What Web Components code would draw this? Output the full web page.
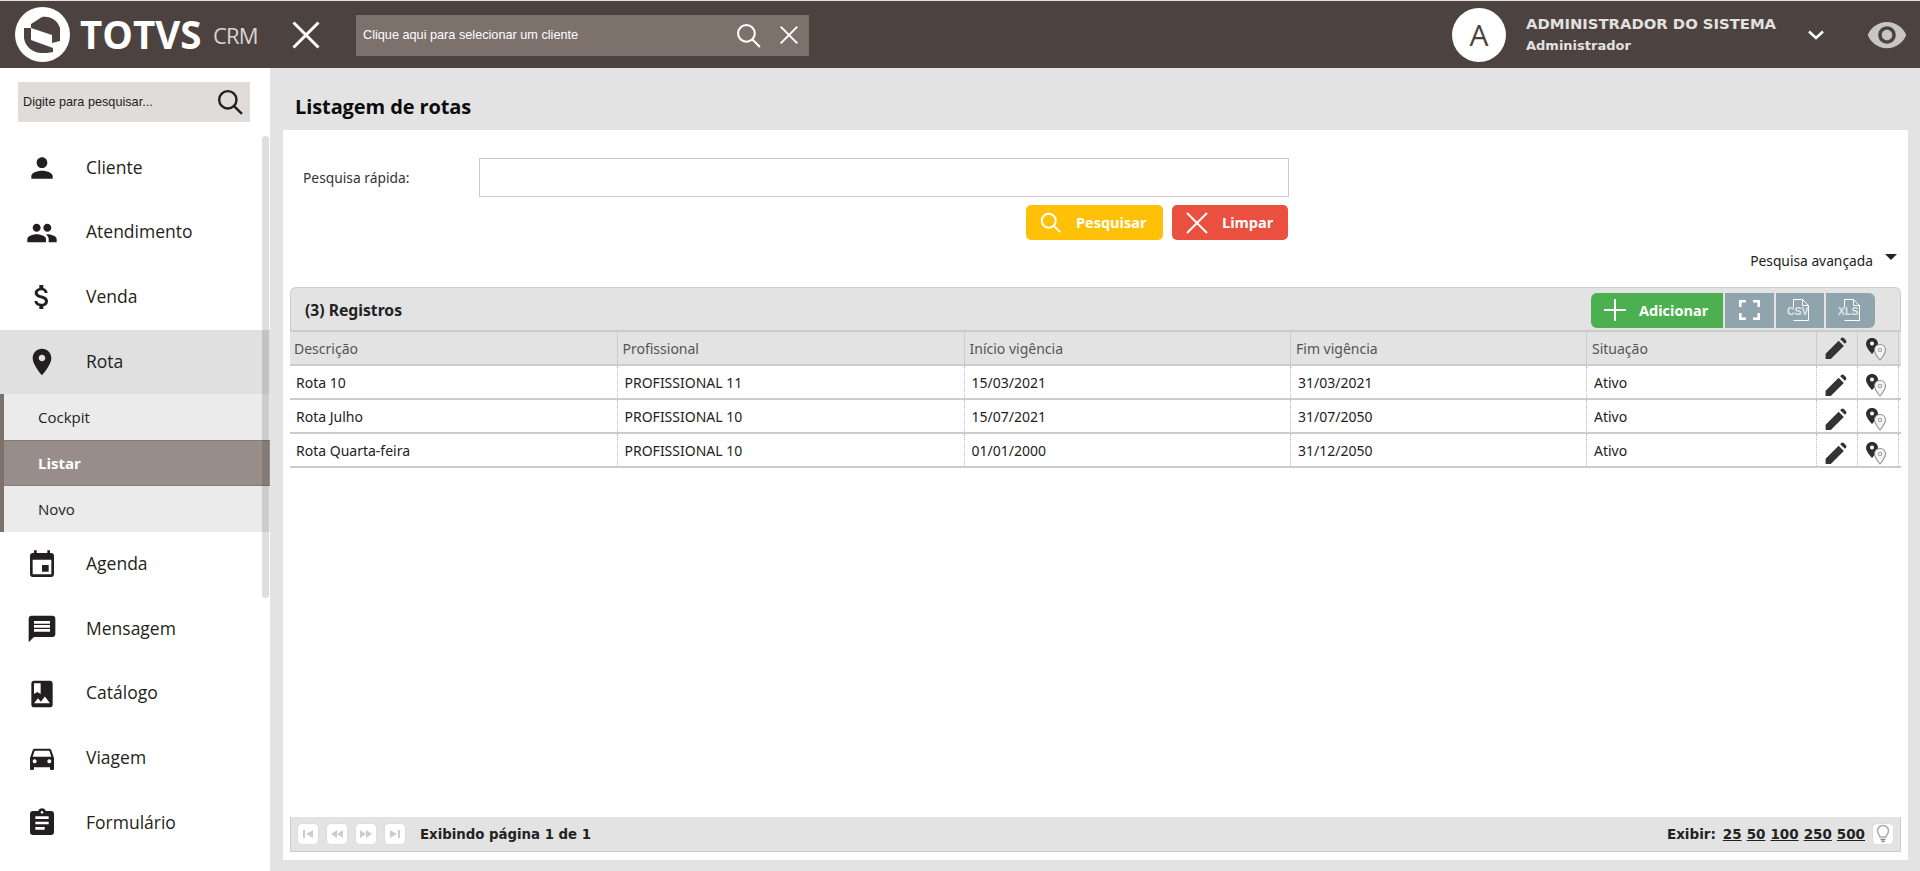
<!DOCTYPE html>
<html lang="pt-BR">
<head>
<meta charset="utf-8">
<title>Listagem de rotas</title>
<style>
  html, body { margin: 0; height: 100%; overflow: hidden; background: #e3e3e3; }
  body { font-family: "Noto Sans", sans-serif; display: flex; flex-direction: column; height: 871px; }
</style>
</head>
<body>
<crm-header></crm-header>
<div style="display:flex;flex:1;min-height:0">
  <crm-sidebar>
    <crm-menu-item icon="person" label="Cliente"></crm-menu-item>
    <crm-menu-item icon="people" label="Atendimento"></crm-menu-item>
    <crm-menu-item icon="money" label="Venda"></crm-menu-item>
    <crm-menu-item icon="place" label="Rota" open></crm-menu-item>
    <crm-sub-item>Cockpit</crm-sub-item>
    <crm-sub-item active>Listar</crm-sub-item>
    <crm-sub-item>Novo</crm-sub-item>
    <crm-menu-item icon="event" label="Agenda"></crm-menu-item>
    <crm-menu-item icon="message" label="Mensagem"></crm-menu-item>
    <crm-menu-item icon="album" label="Catálogo"></crm-menu-item>
    <crm-menu-item icon="car" label="Viagem"></crm-menu-item>
    <crm-menu-item icon="assignment" label="Formulário"></crm-menu-item>
  </crm-sidebar>
  <crm-main title-text="Listagem de rotas">
    <crm-search></crm-search>
    <crm-grid>
      <crm-row head><span>Descrição</span><span>Profissional</span><span>Início vigência</span><span>Fim vigência</span><span>Situação</span></crm-row>
      <crm-row><span>Rota 10</span><span>PROFISSIONAL 11</span><span>15/03/2021</span><span>31/03/2021</span><span>Ativo</span></crm-row>
      <crm-row><span>Rota Julho</span><span>PROFISSIONAL 10</span><span>15/07/2021</span><span>31/07/2050</span><span>Ativo</span></crm-row>
      <crm-row><span>Rota Quarta-feira</span><span>PROFISSIONAL 10</span><span>01/01/2000</span><span>31/12/2050</span><span>Ativo</span></crm-row>
    </crm-grid>
    <crm-pager></crm-pager>
  </crm-main>
</div>

<script>
const ICONS = {
  person: 'M12 12c2.21 0 4-1.79 4-4s-1.79-4-4-4-4 1.79-4 4 1.79 4 4 4zm0 2c-2.67 0-8 1.34-8 4v2h16v-2c0-2.66-5.33-4-8-4z',
  people: 'M16 11c1.66 0 2.99-1.34 2.99-3S17.66 5 16 5c-1.66 0-3 1.34-3 3s1.34 3 3 3zm-8 0c1.66 0 2.99-1.34 2.99-3S9.66 5 8 5C6.34 5 5 6.34 5 8s1.34 3 3 3zm0 2c-2.33 0-7 1.17-7 3.5V19h14v-2.5c0-2.33-4.67-3.5-7-3.5zm8 0c-.29 0-.62.02-.97.05 1.16.84 1.97 1.97 1.97 3.45V19h6v-2.5c0-2.33-4.67-3.5-7-3.5z',
  money: 'M11.8 10.9c-2.27-.59-3-1.2-3-2.15 0-1.09 1.01-1.85 2.7-1.85 1.78 0 2.44.85 2.5 2.1h2.21c-.07-1.72-1.12-3.3-3.21-3.81V3h-3v2.16c-1.94.42-3.5 1.68-3.5 3.61 0 2.31 1.91 3.46 4.7 4.13 2.5.6 3 1.48 3 2.41 0 .69-.49 1.79-2.7 1.79-2.06 0-2.87-.92-2.98-2.1h-2.2c.12 2.19 1.76 3.42 3.68 3.83V21h3v-2.15c1.95-.37 3.5-1.5 3.5-3.55 0-2.84-2.43-3.81-4.7-4.4z',
  place: 'M12 2C8.13 2 5 5.13 5 9c0 5.25 7 13 7 13s7-7.75 7-13c0-3.87-3.13-7-7-7zm0 9.5c-1.38 0-2.5-1.12-2.5-2.5s1.12-2.5 2.5-2.5 2.5 1.12 2.5 2.5-1.12 2.5-2.5 2.5z',
  event: 'M17 12h-5v5h5v-5zM16 1v2H8V1H6v2H5c-1.11 0-1.99.9-1.99 2L3 19c0 1.1.89 2 2 2h14c1.1 0 2-.9 2-2V5c0-1.1-.9-2-2-2h-1V1h-2zm3 18H5V8h14v11z',
  message: 'M20 2H4c-1.1 0-1.99.9-1.99 2L2 22l4-4h14c1.1 0 2-.9 2-2V4c0-1.1-.9-2-2-2zm-2 12H6v-2h12v2zm0-3H6V9h12v2zm0-3H6V6h12v2z',
  album: 'M18 2H6c-1.1 0-2 .9-2 2v16c0 1.1.9 2 2 2h12c1.1 0 2-.9 2-2V4c0-1.1-.9-2-2-2zM6 4h5v8l-2.5-1.5L6 12V4zm0 15l3-3.86 2.14 2.58 3-3.86L18 19H6z',
  car: 'M18.92 6.01C18.72 5.42 18.16 5 17.5 5h-11c-.66 0-1.21.42-1.42 1.01L3 12v8c0 .55.45 1 1 1h1c.55 0 1-.45 1-1v-1h12v1c0 .55.45 1 1 1h1c.55 0 1-.45 1-1v-8l-2.08-5.99zM6.5 16c-.83 0-1.5-.67-1.5-1.5S5.67 13 6.5 13s1.5.67 1.5 1.5S7.33 16 6.5 16zm11 0c-.83 0-1.5-.67-1.5-1.5s.67-1.5 1.5-1.5 1.5.67 1.5 1.5-.67 1.5-1.5 1.5zM5 11l1.5-4.5h11L19 11H5z',
  assignment: 'M19 3h-4.18C14.4 1.84 13.3 1 12 1c-1.3 0-2.4.84-2.82 2H5c-1.1 0-2 .9-2 2v14c0 1.1.9 2 2 2h14c1.1 0 2-.9 2-2V5c0-1.1-.9-2-2-2zm-7 0c.55 0 1 .45 1 1s-.45 1-1 1-1-.45-1-1 .45-1 1-1zm2 14H7v-2h7v2zm3-4H7v-2h10v2zm0-4H7V7h10v2z',
  edit: 'M2.500 22v-5L15 4.500 20 9.500 7.500 22zM16.500 3l1-1c.8-.7 1.700-.7 2.500 0l2 2c.7.8.7 1.700 0 2.500l-1 1z',
  eye: 'M12 4.5C7 4.5 2.73 7.61 1 12c1.73 4.39 6 7.5 11 7.5s9.27-3.11 11-7.5c-1.73-4.39-6-7.5-11-7.5zM12 17c-2.76 0-5-2.24-5-5s2.24-5 5-5 5 2.24 5 5-2.24 5-5 5zm0-8c-1.66 0-3 1.34-3 3s1.34 3 3 3 3-1.34 3-3-1.34-3-3-3z'
};
const svgIcon = (name, size, color) =>
  `<svg width="${size}" height="${size}" viewBox="0 0 24 24" fill="${color}"><path d="${ICONS[name]}"/></svg>`;
// thin line icons used by the search boxes and buttons
const lens = (w, color, sw = 2) =>
  `<svg width="${w}" height="${w}" viewBox="0 0 24 24" fill="none" stroke="${color}" stroke-width="${sw}"><circle cx="10" cy="10" r="8"/><path d="M15.5 15.5L23 23"/></svg>`;
const cross = (w, color, sw = 2) =>
  `<svg width="${w}" height="${w}" viewBox="0 0 24 24" fill="none" stroke="${color}" stroke-width="${sw}"><path d="M2 2L22 22M22 2L2 22"/></svg>`;
const pins = `<svg width="24" height="24" viewBox="0 0 24 24">
  <path d="M8 1C4.3 1 2 3.700 2 7c0 3.800 6 10 6 10s6-6.200 6-10c0-3.300-2.300-6-6-6z" fill="#2e2e2e"/><circle cx="8" cy="6.500" r="2" fill="#fff"/>
  <path d="M16 7.500c-3.300 0-5.500 2.500-5.500 5.500 0 3.500 5.500 10 5.500 10s5.500-6.500 5.500-10c0-3-2.200-5.500-5.500-5.500z" fill="#f4f4f4" stroke="#8f8f8f" stroke-width="1.100"/><circle cx="16" cy="13" r="1.700" fill="none" stroke="#999"/>
</svg>`;

class CrmHeader extends HTMLElement {
  connectedCallback() {
    this.attachShadow({ mode: 'open' });
    this.shadowRoot.innerHTML = `
      <style>
        :host { display: flex; align-items: center; height: 67px; flex: none; margin-top: 1px; background: #4c4340; color: #fff; padding-left: 15px; box-sizing: border-box; }
        .mark { flex: none; display: block; }
        .brand { font: 700 38.500px/1 "Open Sans", sans-serif; margin-left: 10px; width: 123px; flex: none; white-space: nowrap; }
        .crm { font: 400 22px/1 "Open Sans", sans-serif; margin-left: 10px; color: #d8d4d2; width: 45px; flex: none; white-space: nowrap; letter-spacing: -.8px; }
        .close { margin-left: 33px; display: flex; }
        .client { margin-left: 35px; width: 453px; height: 41px; background: #7d716c; display: flex; align-items: center; padding: 0 10px 0 7px; box-sizing: border-box; font: 12.7px "Liberation Sans", sans-serif; margin-top: 1px; }
        .client span { flex: 1; }
        .client svg { display: block; }
        .client svg + svg { margin-left: 18px; }
        .fill { flex: 1; }
        .avatar { width: 54px; height: 54px; border-radius: 50%; background: #fff; color: #4c4340; display: flex; align-items: center; justify-content: center; font: 400 30px "Open Sans", sans-serif; }
        .user { margin-left: 20px; width: 270px; color: #e3e1e0; font: 700 14.800px/22px "DejaVu Sans", sans-serif; white-space: nowrap; }
        .user div + div { font-size: 13px; }
        .chev { margin-left: 11px; display: flex; }
        .eye { margin-left: 41px; margin-right: 12px; display: flex; }
      </style>
      <svg class="mark" width="55" height="55" viewBox="0 0 55 55">
        <circle cx="27.500" cy="27.500" r="27.500" fill="#fff"/>
        <path d="M16 21v-4l11-7c9-1 15 3 18 11v13l-8 2V28z" fill="#4c4340"/>
        <path d="M9 21h7v12l22 8v4c-4 1-8 1-11 1-10 0-17-7-18-15z" fill="#4c4340"/>
      </svg>
      <div class="brand">TOTVS</div>
      <div class="crm">CRM</div>
      <div class="close">${cross(30, '#fff', 2.4)}</div>
      <div class="client"><span>Clique aqui para selecionar um cliente</span>${lens(25, '#fff', 2)}${cross(20, '#fff', 2.4)}</div>
      <div class="fill"></div>
      <div class="avatar">A</div>
      <div class="user"><div>ADMINISTRADOR DO SISTEMA</div><div>Administrador</div></div>
      <div class="chev"><svg width="18" height="12" viewBox="0 0 18 12" fill="none" stroke="#fff" stroke-width="2.500"><path d="M2 2.500L9 9l7-6.500"/></svg></div>
      <div class="eye">${svgIcon('eye', 42, '#c8c6c5')}</div>
    `;
  }
}

class CrmSidebar extends HTMLElement {
  connectedCallback() {
    this.attachShadow({ mode: 'open' });
    this.shadowRoot.innerHTML = `
      <style>
        :host { display: block; position: relative; width: 270px; flex: none; background: #fff; box-sizing: border-box; color: #231f20; }
        .find { margin: 14px 20px 14px 18px; height: 40px; background: #dfdcda; display: flex; align-items: center; justify-content: space-between; padding: 0 7px 0 5px; font: 12.7px "Liberation Sans", sans-serif; color: #231f20; }
        .bar { position: absolute; right: 1px; top: 68px; width: 7px; height: 462px; border-radius: 4px; background: rgba(0,0,0,.13); }
      </style>
      <div class="find"><span>Digite para pesquisar...</span>${lens(26, '#231f20', 2.2)}</div>
      <slot></slot>
      <div class="bar"></div>
    `;
  }
}

class CrmMenuItem extends HTMLElement {
  connectedCallback() {
    this.attachShadow({ mode: 'open' });
    const open = this.hasAttribute('open');
    this.shadowRoot.innerHTML = `
      <style>
        :host { display: flex; align-items: center; height: 64.600px; background: ${open ? '#e0e0e0' : 'transparent'}; font: 400 17.5px "Open Sans", sans-serif; }
        .ic { width: 86px; display: flex; justify-content: center; padding-right: 2px; box-sizing: border-box; }
        .tx { padding-bottom: 3px; }
      </style>
      <div class="ic">${svgIcon(this.getAttribute('icon'), 32, '#231f20')}</div>
      <div class="tx">${this.getAttribute('label')}</div>
    `;
  }
}

class CrmSubItem extends HTMLElement {
  connectedCallback() {
    this.attachShadow({ mode: 'open' });
    const active = this.hasAttribute('active');
    this.shadowRoot.innerHTML = `
      <style>
        :host { display: flex; align-items: center; height: 46px; box-sizing: border-box; padding-left: 34px; border-left: 4px solid #7d716c;
          background: ${active ? '#988d8a' : '#ebebeb'}; color: ${active ? '#fff' : '#231f20'}; font: ${active ? 700 : 400} 15px "Open Sans", sans-serif; ${active ? 'border-top: 1px solid #857a76; border-bottom: 1px solid #857a76;' : ''} }
      </style>
      <slot></slot>
    `;
  }
}

class CrmMain extends HTMLElement {
  connectedCallback() {
    this.attachShadow({ mode: 'open' });
    this.shadowRoot.innerHTML = `
      <style>
        :host { display: flex; flex-direction: column; flex: 1; min-width: 0; padding: 0 12px 11px 13px; box-sizing: border-box; }
        h1 { margin: 0; height: 62px; display: flex; align-items: center; padding: 14px 0 0 12px; box-sizing: border-box; font: 700 20px "Open Sans", sans-serif; color: #0c0c0c; letter-spacing: -.1px; }
        .panel { flex: 1; display: flex; flex-direction: column; background: #fff; padding: 0 7px 8px; min-height: 0; }
      </style>
      <h1>${this.getAttribute('title-text')}</h1>
      <div class="panel"><slot></slot></div>
    `;
  }
}

class CrmSearch extends HTMLElement {
  connectedCallback() {
    this.attachShadow({ mode: 'open' });
    this.shadowRoot.innerHTML = `
      <style>
        :host { display: block; font: 13.800px "Noto Sans", sans-serif; color: #333; padding-top: 28px; }
        .line { display: flex; align-items: center; padding-left: 13px; }
        label { width: 176px; }
        .box { width: 810px; height: 39px; box-sizing: border-box; border: 1px solid #ccc; background: #fff; }
        .btns { display: flex; gap: 9px; margin: 8px 0 0 736px; }
        .btn { height: 35px; border-radius: 5px; display: flex; align-items: center; color: #fff; font: 700 14.5px "Open Sans", sans-serif; box-sizing: border-box; }
        .go { width: 137px; background: #ffc107; padding-left: 14px; gap: 15px; }
        .clear { width: 116px; background: #ea4f3f; padding-left: 13px; gap: 13px; }
        .adv { display: flex; justify-content: flex-end; align-items: center; height: 47px; padding: 0 4px 7px 0; box-sizing: border-box; color: #222; }
        .adv i { width: 0; height: 0; border: 6px solid transparent; border-top: 6px solid #222; border-bottom: 0; margin: -6px 0 0 12px; }
      </style>
      <div class="line"><label>Pesquisa rápida:</label><div class="box"></div></div>
      <div class="btns">
        <div class="btn go">${lens(21, '#fff', 2.2)}<span>Pesquisar</span></div>
        <div class="btn clear">${cross(24, '#fff', 2)}<span>Limpar</span></div>
      </div>
      <div class="adv"><span>Pesquisa avançada</span><i></i></div>
    `;
  }
}

class CrmGrid extends HTMLElement {
  connectedCallback() {
    this.attachShadow({ mode: 'open' });
    const doc = (t) => `<svg width="26" height="24" viewBox="0 0 26 24" fill="none" stroke="#fff" stroke-width="1"><path d="M6.500 9V1.500h9l6 6v15h-15"/><path d="M15.500 1.500v6h6"/><text x="0" y="17" font-family="Liberation Sans" font-size="10.500" fill="#dfe5e8" stroke="none">${t}</text></svg>`;
    this.shadowRoot.innerHTML = `
      <style>
        :host { display: block; flex: 1; min-height: 0; }
        .top { height: 45px; box-sizing: border-box; background: #e3e3e3; border: 1px solid #ccc; border-bottom: 2px solid #ccc; border-radius: 6px 6px 0 0; display: flex; align-items: center; justify-content: space-between; padding: 2px 25px 0 14px; font: 700 15.700px "Noto Sans", sans-serif; color: #222; }
        .tools { display: flex; gap: 2px; height: 35px; }
        .t { background: #90a4ae; width: 48px; display: flex; align-items: center; justify-content: center; }
        .add { background: #4caf50; width: 132px; border-radius: 6px 0 0 6px; color: #fff; gap: 13px; justify-content: flex-start; padding-left: 13px; box-sizing: border-box; font: 700 14.5px "Open Sans", sans-serif; }
        .last { border-radius: 0 6px 6px 0; width: 49px; }
      </style>
      <div class="top">
        <span>(3) Registros</span>
        <div class="tools">
          <div class="t add"><svg width="22" height="22" viewBox="0 0 22 22" stroke="#fff" stroke-width="2"><path d="M11 0v22M0 11h22"/></svg><span>Adicionar</span></div>
          <div class="t" style="width:49px"><svg width="21" height="20" viewBox="0 0 21 20" fill="none" stroke="#fff" stroke-width="2.600"><path d="M1.300 7V1.300H7M14 1.300h5.700V7M1.300 13v5.700H7M14 18.700h5.700V13"/></svg></div>
          <div class="t">${doc('CSV')}</div>
          <div class="t last">${doc('XLS')}</div>
        </div>
      </div>
      <slot></slot>
    `;
  }
}

class CrmRow extends HTMLElement {
  connectedCallback() {
    this.attachShadow({ mode: 'open' });
    const head = this.hasAttribute('head');
    this.shadowRoot.innerHTML = `
      <style>
        :host { display: grid; grid-template-columns: 327.500px 347px 326.500px 296px 230px 41px 41px; height: 34px; box-sizing: border-box; border-bottom: 2px solid #ccc; background: ${head ? '#e3e3e3' : '#fff'}; color: ${head ? '#555' : '#222'}; font: 14px/1 "Noto Sans", sans-serif; align-items: stretch; }
        ::slotted(span) { display: flex; align-items: center; padding: 1px 0 0 ${head ? 5 : 7}px; box-sizing: border-box; border-right: ${head ? '1px solid #ccc' : '1px dotted #bbb'}; }
        ::slotted(span:first-child) { padding-left: ${head ? 4 : 6}px; }
        .i { display: flex; align-items: center; justify-content: center; padding: ${head ? 1 : 6}px 4px 0 0; box-sizing: border-box; border-right: ${head ? '1px solid #ccc' : '1px dotted #bbb'}; }
      </style>
      <slot></slot>
      <div class="i">${svgIcon('edit', 25, '#333')}</div>
      <div class="i">${pins}</div>
    `;
  }
}

class CrmPager extends HTMLElement {
  connectedCallback() {
    this.attachShadow({ mode: 'open' });
    const nav = (d) => `<div class="nb"><svg width="14" height="10" viewBox="0 0 14 10" fill="#ccc"><path d="${d}"/></svg></div>`;
    this.shadowRoot.innerHTML = `
      <style>
        :host { display: flex; align-items: center; height: 35px; flex: none; box-sizing: border-box; background: #e3e3e3; border: 1px solid #ccc; border-top: 0; padding: 0 6px; font: 700 13.500px "DejaVu Sans", sans-serif; color: #222; }
        .nb { width: 22px; height: 22px; background: #fff; border: 1px solid #ddd; border-radius: 5px; box-sizing: border-box; display: flex; align-items: center; justify-content: center; margin-right: 7px; }
        .txt { margin-left: 7px; flex: 1; font-size: 13.300px; }
        .lbl { margin-right: 2px; }
        a { color: #222; text-decoration: underline; margin-left: 5px; }
        .bulb { margin: 0 0 0 7px; width: 22px; height: 22px; background: #fff; border: 1px solid #ddd; border-radius: 5px; box-sizing: border-box; display: flex; align-items: center; justify-content: center; }
      </style>
      ${nav('M2 1v8h2V1zM12 1L5 5l7 4z')}${nav('M7 1L1 5l6 4zM13 1L7 5l6 4z')}${nav('M1 1l6 4-6 4zM7 1l6 4-6 4z')}${nav('M2 1l7 4-7 4zM10 1v8h2V1z')}
      <div class="txt">Exibindo página 1 de 1</div>
      <span class="lbl">Exibir:</span><a>25</a><a>50</a><a>100</a><a>250</a><a>500</a>
      <div class="bulb"><svg width="14" height="18" viewBox="0 0 14 18" fill="none" stroke="#aaa" stroke-width="1.500"><path d="M4 12c0-2-2.500-3-2.500-6a5.500 5.500 0 0 1 11 0c0 3-2.500 4-2.500 6z"/><path d="M4.500 14.500h5M5.500 16.500h3" stroke="#888"/></svg></div>
    `;
  }
}

customElements.define('crm-header', CrmHeader);
customElements.define('crm-sidebar', CrmSidebar);
customElements.define('crm-menu-item', CrmMenuItem);
customElements.define('crm-sub-item', CrmSubItem);
customElements.define('crm-main', CrmMain);
customElements.define('crm-search', CrmSearch);
customElements.define('crm-grid', CrmGrid);
customElements.define('crm-row', CrmRow);
customElements.define('crm-pager', CrmPager);
</script>
</body>
</html>
